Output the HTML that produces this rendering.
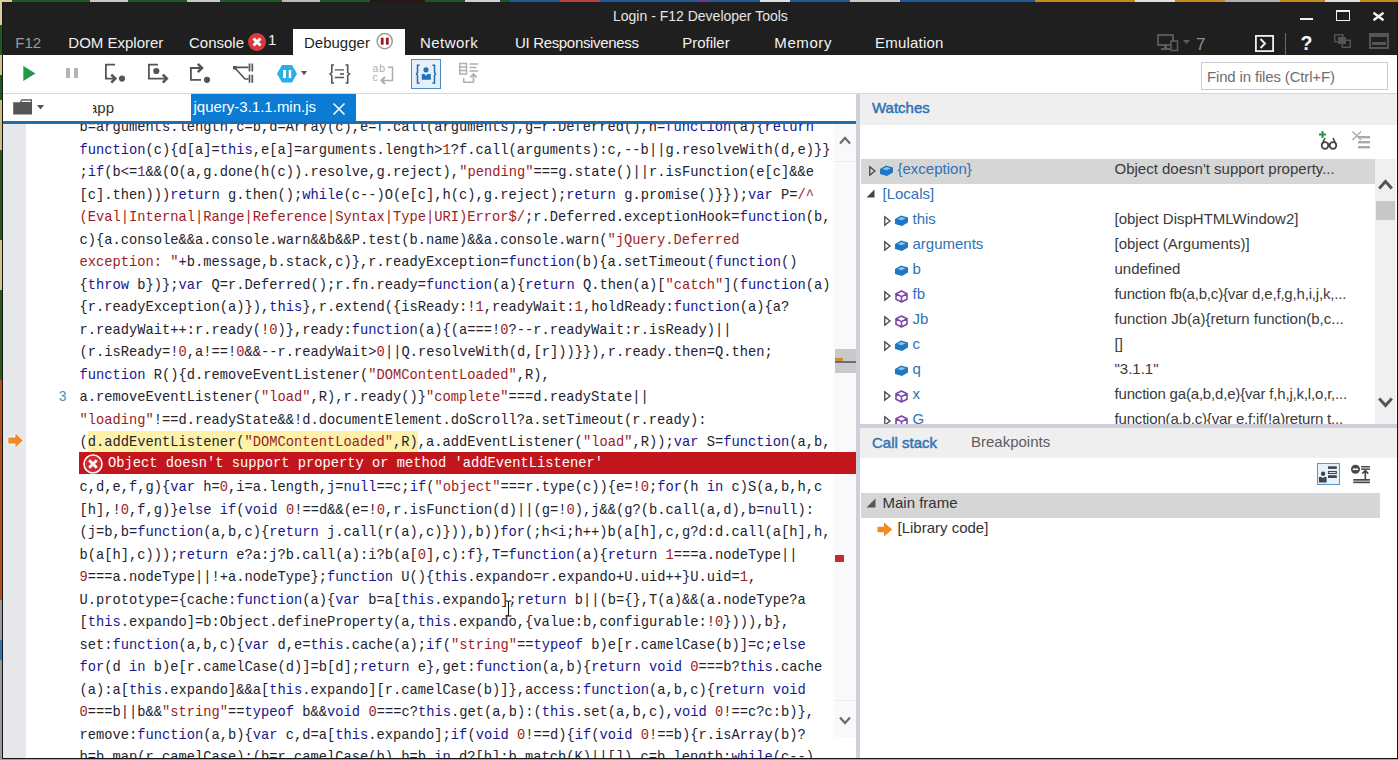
<!DOCTYPE html>
<html><head><meta charset="utf-8"><title>F12</title>
<style>
*{margin:0;padding:0;box-sizing:border-box}
html,body{width:1398px;height:760px;overflow:hidden;background:#a3a3a3;font-family:"Liberation Sans",sans-serif;position:relative}
.a{position:absolute}
svg{position:absolute;overflow:visible}
.t{position:absolute;white-space:nowrap;line-height:20px;font-size:15px}
#code{position:absolute;left:3px;top:124px;width:853px;height:634px;overflow:hidden;background:#fff}
#gut{position:absolute;left:0;top:0;width:23px;height:634px;background:#e6e7ea}
#rows{position:absolute;left:76.5px;top:-7px;font-family:"Liberation Mono",monospace;font-size:13.75px;color:#232330}
.cl{height:22.5px;line-height:22.5px;white-space:pre}
.cl i{font-style:normal}
.k{color:#161690}
.s{color:#9c1c26}
.hl{font-weight:normal;background:#fdf2a8;padding:3.6px 0 3.2px}
.err{background:#c3161c;color:#fff;margin-left:-0.5px;width:779.5px;position:relative;top:-3px}
.et{position:absolute;left:29px;top:1px}
.ei{position:absolute;left:4px;top:2.2px;width:20px;height:20px}
.tab{color:#f2f2f2;top:32.9px}
.tv{color:#3a3a3a}
.tn{color:#2f72b5}
</style></head><body>
<!-- desktop strips -->
<div class="a" style="left:0;top:0;width:1398px;height:2px;background:#1f5a22"></div>
<div class="a" style="left:0;top:0;width:12px;height:2px;background:#d8cf9a"></div>
<div class="a" style="left:90px;top:0;width:38px;height:2px;background:#c8c8c8"></div>
<div class="a" style="left:187px;top:0;width:33px;height:2px;background:#c8c8c8"></div>
<div class="a" style="left:282px;top:0;width:38px;height:2px;background:#b8b8b8"></div>
<div class="a" style="left:370px;top:0;width:55px;height:2px;background:#2a1612"></div>
<div class="a" style="left:465px;top:0;width:35px;height:2px;background:#d0d0d0"></div>
<div class="a" style="left:510px;top:0;width:525px;height:2px;background:#1f5b9a"></div>
<div class="a" style="left:560px;top:0;width:40px;height:2px;background:#b84040"></div>
<div class="a" style="left:698px;top:0;width:12px;height:2px;background:#6a3a8a"></div>
<div class="a" style="left:760px;top:0;width:30px;height:2px;background:#e0e0e0"></div>
<div class="a" style="left:850px;top:0;width:50px;height:2px;background:#c8c8c8"></div>
<div class="a" style="left:1035px;top:0;width:363px;height:2px;background:#c8861e"></div>
<div class="a" style="left:1135px;top:0;width:40px;height:2px;background:#e0e0e0"></div>
<div class="a" style="left:1225px;top:0;width:55px;height:2px;background:#b0b0b0"></div>
<div class="a" style="left:1325px;top:0;width:35px;height:2px;background:#e0e0e0"></div>
<div class="a" style="left:0;top:0px;width:2px;height:25px;background:#d8cf9a"></div>
<div class="a" style="left:0;top:25px;width:2px;height:30px;background:#1f5a22"></div>
<div class="a" style="left:0;top:55px;width:2px;height:20px;background:#cfc48a"></div>
<div class="a" style="left:0;top:75px;width:2px;height:25px;background:#1f5a22"></div>
<div class="a" style="left:0;top:100px;width:2px;height:50px;background:#c9be80"></div>
<div class="a" style="left:0;top:150px;width:2px;height:90px;background:#2a5a22"></div>
<div class="a" style="left:0;top:240px;width:2px;height:50px;background:#cfc48a"></div>
<div class="a" style="left:0;top:290px;width:2px;height:90px;background:#2a5a22"></div>
<div class="a" style="left:0;top:380px;width:2px;height:220px;background:#b5501e"></div>
<div class="a" style="left:0;top:600px;width:2px;height:40px;background:#9a9a9a"></div>
<div class="a" style="left:0;top:640px;width:2px;height:20px;background:#2a7ab0"></div>
<div class="a" style="left:0;top:660px;width:2px;height:100px;background:#9a9a9a"></div>
<!-- window frame -->
<div class="a" style="left:2px;top:2px;width:1396px;height:757px;background:#141414"></div>
<div class="a" style="left:3px;top:2px;width:1394px;height:53px;background:#1f1f1f"></div>
<div class="a" style="left:3px;top:55px;width:1394px;height:703px;background:#fff"></div>

<!-- title -->
<div class="t" style="left:613px;top:5.6px;font-size:14px;color:#e6e6e6">Login - F12 Developer Tools</div>
<div class="a" style="left:1300px;top:18px;width:13px;height:2px;background:#f0f0f0"></div>
<div class="a" style="left:1336px;top:10px;width:14px;height:11px;border:1.5px solid #f0f0f0;border-top-width:2.5px"></div>
<svg style="left:1372px;top:12px" width="13" height="9" viewBox="0 0 13 9"><path d="M1.5 0.8 L11.5 8.2 M11.5 0.8 L1.5 8.2" stroke="#f4f4f4" stroke-width="2.4"/></svg>

<!-- tabs -->
<div class="t tab" style="left:15.3px;color:#9c9c9c">F12</div>
<div class="t tab" style="left:68.3px">DOM Explorer</div>
<div class="t tab" style="left:189px">Console</div>
<svg style="left:248px;top:32.5px" width="18" height="18" viewBox="0 0 18 18"><circle cx="9" cy="9" r="9" fill="#d9383c"/><path d="M5.5 5.5 L12.5 12.5 M12.5 5.5 L5.5 12.5" stroke="#fff" stroke-width="3"/></svg>
<div class="t tab" style="left:268px;top:29.5px">1</div>
<div class="a" style="left:293px;top:29px;width:112px;height:26px;background:#fff"></div>
<div class="t tab" style="left:304px;color:#1e1e1e">Debugger</div>
<svg style="left:376px;top:33px" width="18" height="17" viewBox="0 0 18 17"><circle cx="8.7" cy="8.1" r="7.6" fill="#fff" stroke="#9a9a9a" stroke-width="1.5"/><rect x="4.8" y="4.7" width="2.8" height="7" fill="#9e1a1e"/><rect x="9.9" y="4.7" width="2.8" height="7" fill="#9e1a1e"/></svg>
<div class="t tab" style="left:420px;letter-spacing:0.45px">Network</div>
<div class="t tab" style="left:515px;letter-spacing:-0.33px">UI Responsiveness</div>
<div class="t tab" style="left:682.2px">Profiler</div>
<div class="t tab" style="left:774.3px;letter-spacing:0.6px">Memory</div>
<div class="t tab" style="left:875px;letter-spacing:0.2px">Emulation</div>

<!-- right tab icons -->
<svg style="left:1157px;top:34px" width="22" height="17" viewBox="0 0 22 17"><rect x="1" y="1" width="15" height="10" fill="none" stroke="#5c5c5c" stroke-width="1.8"/><rect x="7" y="11" width="3" height="3" fill="#5c5c5c"/><rect x="4" y="14" width="9" height="2" fill="#5c5c5c"/><rect x="14" y="7" width="6.5" height="9.5" fill="#1f1f1f" stroke="#5c5c5c" stroke-width="1.6"/></svg>
<svg style="left:1183px;top:39.5px" width="7" height="4" viewBox="0 0 7 4"><path d="M0 0 H7 L3.5 4 Z" fill="#5c5c5c"/></svg>
<div class="t tab" style="left:1196px;top:34.5px;font-size:17px;color:#8e8e8e">7</div>
<svg style="left:1255px;top:35px" width="19" height="17" viewBox="0 0 19 17"><rect x="0.9" y="0.9" width="17.2" height="15.2" fill="none" stroke="#f0f0f0" stroke-width="1.8"/><path d="M5.5 4 L10 8.5 L5.5 13" fill="none" stroke="#f0f0f0" stroke-width="2"/></svg>
<div class="a" style="left:1285px;top:33px;width:1px;height:22px;background:#6a6a6a"></div>
<div class="t tab" style="left:1300.5px;top:33px;font-weight:bold;font-size:19.5px;color:#fafafa">?</div>
<svg style="left:1334px;top:34px" width="17" height="14" viewBox="0 0 17 14"><rect x="0.7" y="0.7" width="8" height="7" fill="none" stroke="#555" stroke-width="1.4"/><rect x="4" y="3" width="8" height="7" fill="#555"/><rect x="8.3" y="6.3" width="8" height="7" fill="none" stroke="#555" stroke-width="1.4"/></svg>
<svg style="left:1369px;top:33px" width="20" height="16" viewBox="0 0 20 16"><rect x="1" y="1" width="18" height="14" fill="none" stroke="#555" stroke-width="2"/><rect x="1" y="1" width="18" height="3" fill="#555"/><rect x="3" y="9" width="14" height="3" fill="#555"/></svg>

<!-- toolbar -->
<div class="a" style="left:3px;top:93px;width:1394px;height:1px;background:#d6d6d6"></div>
<svg style="left:23px;top:65.5px" width="13" height="15" viewBox="0 0 13 15"><path d="M0.3 0 L12.5 7.5 L0.3 15 Z" fill="#1e9a48"/></svg>
<div class="a" style="left:66px;top:67.5px;width:4px;height:10.5px;background:#b4b4b4"></div>
<div class="a" style="left:73.5px;top:67.5px;width:4px;height:10.5px;background:#b4b4b4"></div>
<!-- step icons -->
<svg style="left:100px;top:58px" width="115" height="30" viewBox="0 0 115 30"><g fill="none" stroke="#555" stroke-width="1.8"><path d="M15 6.6 H5.9 V20.6 H15"/><path d="M58 6.6 H48.9 V20.6 H67"/><path d="M101 21.8 H90.9 V10 H102"/></g><g fill="none" stroke="#555" stroke-width="2.6" stroke-linejoin="miter"><path d="M11.3 16.6 L15.3 20.6 L11.3 24.6"/><path d="M62.8 16.6 L66.8 20.6 L62.8 24.6"/><path d="M97.8 5.8 L102 10 L97.8 14.2"/></g><g fill="#555"><circle cx="22" cy="20.6" r="3.1"/><circle cx="56.3" cy="13" r="3.1"/><circle cx="107" cy="21.8" r="3.1"/></g></svg>
<!-- break on new worker -->
<svg style="left:225px;top:58px" width="30" height="28" viewBox="0 0 30 28"><rect x="8" y="8" width="3.6" height="3.4" fill="#555"/><path d="M10 9.4 H23.5 M10 10 L20 21 H23.5" fill="none" stroke="#555" stroke-width="1.6"/><path d="M24.5 5.4 V13.5 M27.3 5.4 V13.5 M24.5 16.7 V24.7 M27.3 16.7 V24.7" stroke="#555" stroke-width="1.7"/></svg>
<!-- hex pause -->
<svg style="left:277px;top:65px" width="20" height="18" viewBox="0 0 20 18"><path d="M5 0 H15 L20 8.7 L15 17.4 H5 L0 8.7 Z" fill="#2aaee3"/><rect x="6.1" y="5" width="2.9" height="8" fill="#fff"/><rect x="11.7" y="5" width="2.5" height="8" fill="#fff"/></svg>
<svg style="left:300.8px;top:71px" width="6" height="4.2" viewBox="0 0 6 4.2"><path d="M0 0 H6.1 L3 4.2 Z" fill="#555"/></svg>
<!-- {=} -->
<svg style="left:329px;top:64px" width="22" height="20" viewBox="0 0 22 20"><path d="M5 1 H2.8 V8.5 L1 10 L2.8 11.5 V19 H5" fill="none" stroke="#555" stroke-width="1.6"/><path d="M16.5 1 H18.7 V8.5 L20.5 10 L18.7 11.5 V19 H16.5" fill="none" stroke="#555" stroke-width="1.6"/><path d="M5.8 5.9 H15 M5.8 13.5 H15" stroke="#555" stroke-width="1.4"/><path d="M11 10 H15" stroke="#555" stroke-width="1.6"/></svg>
<!-- abc grayed -->
<svg style="left:372px;top:62px" width="22" height="22" viewBox="0 0 22 22"><text x="0.5" y="9.8" font-family="Liberation Sans" font-size="10.5" fill="#adadad" letter-spacing="1">ab</text><text x="0.5" y="19" font-family="Liberation Sans" font-size="10.5" fill="#adadad">c</text><path d="M16 5.2 H20.5 V18.5 H10" fill="none" stroke="#adadad" stroke-width="1.5"/><path d="M13 15 L9.5 18.5 L13 22" fill="none" stroke="#adadad" stroke-width="2"/></svg>
<!-- active button -->
<div class="a" style="left:411px;top:59px;width:30px;height:30px;background:#e6f0fb;border:1px solid #4f8cc4"></div>
<svg style="left:416px;top:64px" width="20" height="20" viewBox="0 0 20 20"><path d="M3.6 1.2 H1.5 V8.5 L0.5 10 L1.5 11.5 V19 H3.6" fill="none" stroke="#2a6aa6" stroke-width="1.5"/><path d="M16.4 1.2 H18.5 V8.5 L19.5 10 L18.5 11.5 V19 H16.4" fill="none" stroke="#2a6aa6" stroke-width="1.5"/><circle cx="10" cy="5.8" r="2.6" fill="#1f72bb"/><path d="M5.8 15.7 V10 H8.3 L10 11.8 L11.7 10 H14.8 V15.7 Z" fill="#1f72bb"/></svg>
<!-- pretty print grayed -->
<svg style="left:459px;top:62px" width="20" height="22" viewBox="0 0 20 22"><rect x="0.8" y="1.5" width="6.7" height="10.5" fill="none" stroke="#b0b0b0" stroke-width="1.5"/><path d="M0.8 5 H7.5 M0.8 8.5 H7.5" stroke="#b0b0b0" stroke-width="1.3"/><path d="M10.5 2 H19 M10.5 5.5 H17.5 M10.5 9 H19" stroke="#b0b0b0" stroke-width="1.4"/><path d="M4.7 16 V20.3 H14.5" fill="none" stroke="#b0b0b0" stroke-width="1.5"/><path d="M14.5 20.3 V12.5 M11.2 15.5 L14.5 12 L17.8 15.5" fill="none" stroke="#b0b0b0" stroke-width="1.7"/></svg>
<!-- find input -->
<div class="a" style="left:1201px;top:62px;width:187px;height:28px;border:1px solid #c6cbd6;background:#fff"></div>
<div class="t" style="left:1207px;top:66.8px;color:#6f6f6f;letter-spacing:-0.16px">Find in files (Ctrl+F)</div>

<!-- file tab row -->
<svg style="left:13px;top:99px" width="20" height="16" viewBox="0 0 20 16"><path d="M0.2 3.2 H6.8 L8.3 0.2 H19 V15.6 H0.2 Z" fill="#555"/><path d="M8.6 2.3 H17.9" stroke="#fff" stroke-width="1.3"/></svg>
<svg style="left:36.5px;top:105px" width="7" height="5" viewBox="0 0 7 5"><path d="M0 0 H7 L3.5 4.6 Z" fill="#555"/></svg>
<div class="t" style="left:89px;top:98px;color:#333">app</div>
<div class="a" style="left:80px;top:96px;width:12.5px;height:24px;background:#fff"></div>
<div class="a" style="left:191px;top:94px;width:165px;height:28px;background:#0b7bd3"></div>
<div class="t" style="left:193.5px;top:97px;color:#fff">jquery-3.1.1.min.js</div>
<svg style="left:333px;top:103px" width="12" height="12" viewBox="0 0 12 12"><path d="M0.5 0.5 L11.5 11.5 M11.5 0.5 L0.5 11.5" stroke="#fff" stroke-width="1.5"/></svg>
<div class="a" style="left:3px;top:121px;width:853px;height:3px;background:#1f6daf"></div>

<!-- code -->
<div id="code">
<div id="gut"></div>
<!-- scrollbar -->
<div class="a" style="left:831px;top:0;width:22px;height:613px;background:#f9f9f9"></div><div class="a" style="left:831px;top:37px;width:22px;height:1px;background:#ededed"></div><div class="a" style="left:831px;top:575.5px;width:22px;height:1px;background:#ededed"></div>
<svg style="left:836px;top:12px" width="12" height="9" viewBox="0 0 12 9"><path d="M1 7.5 L6 2 L11 7.5" fill="none" stroke="#6c6c6c" stroke-width="2.2"/></svg>
<svg style="left:836px;top:591.5px" width="12" height="9" viewBox="0 0 12 9"><path d="M1 1.5 L6 7 L11 1.5" fill="none" stroke="#6c6c6c" stroke-width="2.2"/></svg>
<div class="a" style="left:831.5px;top:225px;width:21px;height:24px;background:#c9c9c9"></div>
<div class="a" style="left:832px;top:234px;width:8px;height:5px;background:#d08a3a"></div>
<div class="a" style="left:832px;top:237px;width:21px;height:2px;background:#6a6a8a"></div>
<div class="a" style="left:832.2px;top:430.5px;width:8.6px;height:7.5px;background:#c62a33"></div>
<div id="rows">
<div class="cl">b=arguments.length,c=b,d=Array(c),e=f.call(arguments),g=r.Deferred(),h=<i class="k">function</i>(a){<i class="k">return</i></div>
<div class="cl"><i class="k">function</i>(c){d[a]=<i class="k">this</i>,e[a]=arguments.length&gt;<i class="s">1</i>?f.call(arguments):c,--b||g.resolveWith(d,e)}}</div>
<div class="cl">;<i class="k">if</i>(b&lt;=<i class="s">1</i>&amp;&amp;(O(a,g.done(h(c)).resolve,g.reject),<i class="s">"pending"</i>===g.state()||r.isFunction(e[c]&amp;&amp;e</div>
<div class="cl">[c].then)))<i class="k">return</i> g.then();<i class="k">while</i>(c--)O(e[c],h(c),g.reject);<i class="k">return</i> g.promise()}});<i class="k">var</i> P=<i class="s">/^</i></div>
<div class="cl"><i class="s">(Eval|Internal|Range|Reference|Syntax|Type|URI)Error$/</i>;r.Deferred.exceptionHook=<i class="k">function</i>(b,</div>
<div class="cl">c){a.console&amp;&amp;a.console.warn&amp;&amp;b&amp;&amp;P.test(b.name)&amp;&amp;a.console.warn(<i class="s">"jQuery.Deferred</i></div>
<div class="cl"><i class="s">exception: "</i>+b.message,b.stack,c)},r.readyException=<i class="k">function</i>(b){a.setTimeout(<i class="k">function</i>()</div>
<div class="cl">{<i class="k">throw</i> b})};<i class="k">var</i> Q=r.Deferred();r.fn.ready=<i class="k">function</i>(a){<i class="k">return</i> Q.then(a)[<i class="s">"catch"</i>](<i class="k">function</i>(a)</div>
<div class="cl">{r.readyException(a)}),<i class="k">this</i>},r.extend({isReady:!<i class="s">1</i>,readyWait:<i class="s">1</i>,holdReady:<i class="k">function</i>(a){a?</div>
<div class="cl">r.readyWait++:r.ready(!<i class="s">0</i>)},ready:<i class="k">function</i>(a){(a===!<i class="s">0</i>?--r.readyWait:r.isReady)||</div>
<div class="cl">(r.isReady=!<i class="s">0</i>,a!==!<i class="s">0</i>&amp;&amp;--r.readyWait&gt;<i class="s">0</i>||Q.resolveWith(d,[r]))}}),r.ready.then=Q.then;</div>
<div class="cl"><i class="k">function</i> R(){d.removeEventListener(<i class="s">"DOMContentLoaded"</i>,R),</div>
<div class="cl">a.removeEventListener(<i class="s">"load"</i>,R),r.ready()}<i class="s">"complete"</i>===d.readyState||</div>
<div class="cl"><i class="s">"loading"</i>!==d.readyState&amp;&amp;!d.documentElement.doScroll?a.setTimeout(r.ready):</div>
<div class="cl">(<b class="hl">d.addEventListener(<i class="s">"DOMContentLoaded"</i>,R)</b>,a.addEventListener(<i class="s">"load"</i>,R));<i class="k">var</i> S=<i class="k">function</i>(a,b,</div>
<div class="cl err"><svg class="ei" width="20" height="20" viewBox="0 0 20 20"><circle cx="10" cy="10" r="9" fill="#d02a2e" stroke="#fff" stroke-width="1.6"/><path d="M6.2 6.2 L13.8 13.8 M13.8 6.2 L6.2 13.8" stroke="#fff" stroke-width="2.8"/></svg><span class="et">Object doesn't support property or method 'addEventListener'</span></div>
<div class="cl">c,d,e,f,g){<i class="k">var</i> h=<i class="s">0</i>,i=a.length,j=<i class="k">null</i>==c;<i class="k">if</i>(<i class="s">"object"</i>===r.type(c)){e=!<i class="s">0</i>;<i class="k">for</i>(h <i class="k">in</i> c)S(a,b,h,c</div>
<div class="cl">[h],!<i class="s">0</i>,f,g)}<i class="k">else</i> <i class="k">if</i>(<i class="k">void</i> <i class="s">0</i>!==d&amp;&amp;(e=!<i class="s">0</i>,r.isFunction(d)||(g=!<i class="s">0</i>),j&amp;&amp;(g?(b.call(a,d),b=<i class="k">null</i>):</div>
<div class="cl">(j=b,b=<i class="k">function</i>(a,b,c){<i class="k">return</i> j.call(r(a),c)})),b))<i class="k">for</i>(;h&lt;i;h++)b(a[h],c,g?d:d.call(a[h],h,</div>
<div class="cl">b(a[h],c)));<i class="k">return</i> e?a:j?b.call(a):i?b(a[<i class="s">0</i>],c):f},T=<i class="k">function</i>(a){<i class="k">return</i> <i class="s">1</i>===a.nodeType||</div>
<div class="cl"><i class="s">9</i>===a.nodeType||!+a.nodeType};<i class="k">function</i> U(){<i class="k">this</i>.expando=r.expando+U.uid++}U.uid=<i class="s">1</i>,</div>
<div class="cl">U.prototype={cache:<i class="k">function</i>(a){<i class="k">var</i> b=a[<i class="k">this</i>.expando];<i class="k">return</i> b||(b={},T(a)&amp;&amp;(a.nodeType?a</div>
<div class="cl">[<i class="k">this</i>.expando]=b:Object.defineProperty(a,<i class="k">this</i>.expando,{value:b,configurable:!<i class="s">0</i>}))),b},</div>
<div class="cl">set:<i class="k">function</i>(a,b,c){<i class="k">var</i> d,e=<i class="k">this</i>.cache(a);<i class="k">if</i>(<i class="s">"string"</i>==<i class="k">typeof</i> b)e[r.camelCase(b)]=c;<i class="k">else</i></div>
<div class="cl"><i class="k">for</i>(d <i class="k">in</i> b)e[r.camelCase(d)]=b[d];<i class="k">return</i> e},get:<i class="k">function</i>(a,b){<i class="k">return</i> <i class="k">void</i> <i class="s">0</i>===b?<i class="k">this</i>.cache</div>
<div class="cl">(a):a[<i class="k">this</i>.expando]&amp;&amp;a[<i class="k">this</i>.expando][r.camelCase(b)]},access:<i class="k">function</i>(a,b,c){<i class="k">return</i> <i class="k">void</i></div>
<div class="cl"><i class="s">0</i>===b||b&amp;&amp;<i class="s">"string"</i>==<i class="k">typeof</i> b&amp;&amp;<i class="k">void</i> <i class="s">0</i>===c?<i class="k">this</i>.get(a,b):(<i class="k">this</i>.set(a,b,c),<i class="k">void</i> <i class="s">0</i>!==c?c:b)},</div>
<div class="cl">remove:<i class="k">function</i>(a,b){<i class="k">var</i> c,d=a[<i class="k">this</i>.expando];<i class="k">if</i>(<i class="k">void</i> <i class="s">0</i>!==d){<i class="k">if</i>(<i class="k">void</i> <i class="s">0</i>!==b){r.isArray(b)?</div>
<div class="cl">b=b.map(r.camelCase):(b=r.camelCase(b),b=b <i class="k">in</i> d?[b]:b.match(K)||[]),c=b.length;<i class="k">while</i>(c--)</div>
</div>
<div class="t" style="left:55.5px;top:264px;font-family:'Liberation Mono',monospace;font-size:13.75px;color:#4a8bb5">3</div>
<svg style="left:3.5px;top:308px" width="17" height="17" viewBox="0 0 17 17"><path d="M0.8 5 H8 V0.6 L16.2 8.5 L8 16.4 V12 H0.8 Z" fill="#f08a24" stroke="#fff" stroke-width="0.9"/></svg>
<!-- text cursor -->
<svg style="left:501px;top:476px" width="9" height="17" viewBox="0 0 9 17"><path d="M1.5 1 H3.5 Q4.5 1 4.5 2 V15 Q4.5 16 3.5 16 H1.5 M7.5 1 H5.5 Q4.5 1 4.5 2 M4.5 15 Q4.5 16 5.5 16 H7.5" fill="none" stroke="#111" stroke-width="1.1"/></svg>
</div>

<!-- splitter -->
<div class="a" style="left:856px;top:94px;width:4px;height:664px;background:#cfd0dc"></div>

<!-- right pane -->
<div class="a" style="left:860px;top:94px;width:537px;height:30.5px;background:#efefef"></div>
<div class="t tn" style="left:872px;top:98px;font-size:15px;-webkit-text-stroke:0.45px #2f72b5">Watches</div>
<!-- add watch icon -->
<svg style="left:1319px;top:131px" width="19" height="19" viewBox="0 0 19 19"><path d="M3.5 0 V7 M0 3.5 H7" stroke="#1a9a4a" stroke-width="2"/><circle cx="6" cy="14.5" r="3.3" fill="none" stroke="#444" stroke-width="1.8"/><circle cx="14" cy="14.5" r="3.3" fill="none" stroke="#444" stroke-width="1.8"/><path d="M9 13.5 Q10 12.5 11 13.5 M3 13 L6 7 M17 13 L14 7" fill="none" stroke="#444" stroke-width="1.6"/></svg>
<svg style="left:1352px;top:131px" width="19" height="19" viewBox="0 0 19 19"><path d="M0.5 0.5 L9 9 M9 0.5 L0.5 9" stroke="#aaa" stroke-width="1.4"/><rect x="6" y="5" width="12" height="2.4" fill="#aaa"/><rect x="6" y="10" width="12" height="2.4" fill="#aaa"/><rect x="6" y="15" width="12" height="2.4" fill="#aaa"/></svg>

<!-- watches tree -->
<div class="a" style="left:861px;top:159px;width:514px;height:24.5px;background:#d6d6d6"></div>
<div class="a" style="left:860px;top:159px;width:515px;height:265px;overflow:hidden">
<svg style="left:9px;top:6.5px" width="7" height="10" viewBox="0 0 7 10"><path d="M0.8 0.8 L6 5 L0.8 9.2 Z" fill="none" stroke="#444" stroke-width="1.3"/></svg>
<svg style="left:20px;top:6px" width="13" height="11" viewBox="0 0 13 11"><path d="M0 4 L6 0.5 L13 2.5 V7.5 L7 11 L0 9 Z" fill="#1f78c4"/><path d="M2.5 4 L6.3 2 L10.5 3.2 L6.8 5.2 Z" fill="#8cc4ee"/></svg>
<div class="t tn" style="left:37.5px;top:0px">{exception}</div>
<div class="t tv" style="left:254.5px;top:0px;letter-spacing:0">Object doesn&#x27;t support property...</div>
<svg style="left:6.3px;top:30px" width="9" height="9" viewBox="0 0 9 9"><path d="M8.5 0.5 V8.5 H0.5 Z" fill="#444"/></svg>
<div class="t tn" style="left:22.5px;top:25px">[Locals]</div>
<svg style="left:24px;top:56.5px" width="7" height="10" viewBox="0 0 7 10"><path d="M0.8 0.8 L6 5 L0.8 9.2 Z" fill="none" stroke="#444" stroke-width="1.3"/></svg>
<svg style="left:35px;top:56px" width="13" height="11" viewBox="0 0 13 11"><path d="M0 4 L6 0.5 L13 2.5 V7.5 L7 11 L0 9 Z" fill="#1f78c4"/><path d="M2.5 4 L6.3 2 L10.5 3.2 L6.8 5.2 Z" fill="#8cc4ee"/></svg>
<div class="t tn" style="left:52.5px;top:50px">this</div>
<div class="t tv" style="left:254.5px;top:50px;letter-spacing:0">[object DispHTMLWindow2]</div>
<svg style="left:24px;top:81.5px" width="7" height="10" viewBox="0 0 7 10"><path d="M0.8 0.8 L6 5 L0.8 9.2 Z" fill="none" stroke="#444" stroke-width="1.3"/></svg>
<svg style="left:35px;top:81px" width="13" height="11" viewBox="0 0 13 11"><path d="M0 4 L6 0.5 L13 2.5 V7.5 L7 11 L0 9 Z" fill="#1f78c4"/><path d="M2.5 4 L6.3 2 L10.5 3.2 L6.8 5.2 Z" fill="#8cc4ee"/></svg>
<div class="t tn" style="left:52.5px;top:75px">arguments</div>
<div class="t tv" style="left:254.5px;top:75px;letter-spacing:0">[object (Arguments)]</div>
<svg style="left:35px;top:106px" width="13" height="11" viewBox="0 0 13 11"><path d="M0 4 L6 0.5 L13 2.5 V7.5 L7 11 L0 9 Z" fill="#1f78c4"/><path d="M2.5 4 L6.3 2 L10.5 3.2 L6.8 5.2 Z" fill="#8cc4ee"/></svg>
<div class="t tn" style="left:52.5px;top:100px">b</div>
<div class="t tv" style="left:254.5px;top:100px;letter-spacing:0">undefined</div>
<svg style="left:24px;top:131.5px" width="7" height="10" viewBox="0 0 7 10"><path d="M0.8 0.8 L6 5 L0.8 9.2 Z" fill="none" stroke="#444" stroke-width="1.3"/></svg>
<svg style="left:35px;top:130.5px" width="13" height="13" viewBox="0 0 13 13"><path d="M6.5 1 L12 3.8 V9.2 L6.5 12 L1 9.2 V3.8 Z M1 3.8 L6.5 6.6 L12 3.8 M6.5 6.6 V12" fill="none" stroke="#7a48a6" stroke-width="1.6" stroke-linejoin="round"/></svg>
<div class="t tn" style="left:52.5px;top:125px">fb</div>
<div class="t tv" style="left:254.5px;top:125px;letter-spacing:-0.18px">function fb(a,b,c){var d,e,f,g,h,i,j,k,...</div>
<svg style="left:24px;top:156.5px" width="7" height="10" viewBox="0 0 7 10"><path d="M0.8 0.8 L6 5 L0.8 9.2 Z" fill="none" stroke="#444" stroke-width="1.3"/></svg>
<svg style="left:35px;top:155.5px" width="13" height="13" viewBox="0 0 13 13"><path d="M6.5 1 L12 3.8 V9.2 L6.5 12 L1 9.2 V3.8 Z M1 3.8 L6.5 6.6 L12 3.8 M6.5 6.6 V12" fill="none" stroke="#7a48a6" stroke-width="1.6" stroke-linejoin="round"/></svg>
<div class="t tn" style="left:52.5px;top:150px">Jb</div>
<div class="t tv" style="left:254.5px;top:150px;letter-spacing:0">function Jb(a){return function(b,c...</div>
<svg style="left:24px;top:181.5px" width="7" height="10" viewBox="0 0 7 10"><path d="M0.8 0.8 L6 5 L0.8 9.2 Z" fill="none" stroke="#444" stroke-width="1.3"/></svg>
<svg style="left:35px;top:181px" width="13" height="11" viewBox="0 0 13 11"><path d="M0 4 L6 0.5 L13 2.5 V7.5 L7 11 L0 9 Z" fill="#1f78c4"/><path d="M2.5 4 L6.3 2 L10.5 3.2 L6.8 5.2 Z" fill="#8cc4ee"/></svg>
<div class="t tn" style="left:52.5px;top:175px">c</div>
<div class="t tv" style="left:254.5px;top:175px;letter-spacing:0">[]</div>
<svg style="left:35px;top:206px" width="13" height="11" viewBox="0 0 13 11"><path d="M0 4 L6 0.5 L13 2.5 V7.5 L7 11 L0 9 Z" fill="#1f78c4"/><path d="M2.5 4 L6.3 2 L10.5 3.2 L6.8 5.2 Z" fill="#8cc4ee"/></svg>
<div class="t tn" style="left:52.5px;top:200px">q</div>
<div class="t tv" style="left:254.5px;top:200px;letter-spacing:0">&quot;3.1.1&quot;</div>
<svg style="left:24px;top:231.5px" width="7" height="10" viewBox="0 0 7 10"><path d="M0.8 0.8 L6 5 L0.8 9.2 Z" fill="none" stroke="#444" stroke-width="1.3"/></svg>
<svg style="left:35px;top:230.5px" width="13" height="13" viewBox="0 0 13 13"><path d="M6.5 1 L12 3.8 V9.2 L6.5 12 L1 9.2 V3.8 Z M1 3.8 L6.5 6.6 L12 3.8 M6.5 6.6 V12" fill="none" stroke="#7a48a6" stroke-width="1.6" stroke-linejoin="round"/></svg>
<div class="t tn" style="left:52.5px;top:225px">x</div>
<div class="t tv" style="left:254.5px;top:225px;letter-spacing:-0.18px">function ga(a,b,d,e){var f,h,j,k,l,o,r,...</div>
<svg style="left:24px;top:256.5px" width="7" height="10" viewBox="0 0 7 10"><path d="M0.8 0.8 L6 5 L0.8 9.2 Z" fill="none" stroke="#444" stroke-width="1.3"/></svg>
<svg style="left:35px;top:255.5px" width="13" height="13" viewBox="0 0 13 13"><path d="M6.5 1 L12 3.8 V9.2 L6.5 12 L1 9.2 V3.8 Z M1 3.8 L6.5 6.6 L12 3.8 M6.5 6.6 V12" fill="none" stroke="#7a48a6" stroke-width="1.6" stroke-linejoin="round"/></svg>
<div class="t tn" style="left:52.5px;top:250px">G</div>
<div class="t tv" style="left:254.5px;top:250px;letter-spacing:-0.18px">function(a,b,c){var e,f;if(!a)return t...</div>
</div>

<!-- watches scrollbar -->
<div class="a" style="left:1375px;top:159px;width:21px;height:265px;background:#f0f0f0"></div>
<svg style="left:1378px;top:179px" width="15" height="11" viewBox="0 0 15 11"><path d="M1.2 9.5 L7.5 2.5 L13.8 9.5" fill="none" stroke="#555" stroke-width="3"/></svg>
<div class="a" style="left:1376px;top:201px;width:19px;height:19px;background:#c8c8c8"></div>
<svg style="left:1378px;top:397px" width="15" height="11" viewBox="0 0 15 11"><path d="M1.2 1.5 L7.5 8.5 L13.8 1.5" fill="none" stroke="#555" stroke-width="3"/></svg>

<!-- h splitter -->
<div class="a" style="left:860px;top:424px;width:537px;height:4px;background:#cfd0dc"></div>
<div class="a" style="left:860px;top:428px;width:537px;height:30px;background:#efefef"></div>
<div class="t tn" style="left:872px;top:432.5px;font-size:15px;-webkit-text-stroke:0.45px #2f72b5">Call stack</div>
<div class="t" style="left:971px;top:432px;color:#5c5c5c;font-size:15px">Breakpoints</div>
<!-- call stack icons -->
<div class="a" style="left:1317px;top:463px;width:23px;height:22px;border:1px solid #5b95cc;background:#e8f2fc"></div>
<svg style="left:1317px;top:463px" width="23" height="22" viewBox="0 0 23 22"><circle cx="6.1" cy="10.8" r="2.2" fill="#444"/><path d="M1.9 19.6 V14 H4.7 L5.8 15.5 L6.9 14 H9.6 V19.6 Z" fill="#444"/><rect x="11" y="3.3" width="8.8" height="2.6" fill="#444"/><rect x="11.5" y="8.5" width="7.8" height="2" fill="none" stroke="#444" stroke-width="1.1"/><rect x="11" y="12.2" width="8.8" height="2.8" fill="#444"/></svg>
<svg style="left:1350px;top:463px" width="21" height="21" viewBox="0 0 21 21"><circle cx="5.5" cy="6.3" r="4.5" fill="#484848"/><rect x="2.8" y="5.5" width="5.4" height="1.6" fill="#fff"/><rect x="11.1" y="3" width="8.8" height="1.5" fill="#484848"/><rect x="11.1" y="5.4" width="8.8" height="1.5" fill="#484848"/><path d="M12.4 10.6 L15.3 7.4 L18.2 10.6 M15.3 7.8 V16.5" fill="none" stroke="#484848" stroke-width="1.6"/><rect x="3.3" y="16" width="16.6" height="1.7" fill="#484848"/><rect x="3.3" y="18.5" width="16.6" height="1.7" fill="#484848"/></svg>
<div class="a" style="left:861px;top:493px;width:519px;height:25px;background:#d6d6d6"></div>
<svg style="left:866px;top:498px" width="10" height="10" viewBox="0 0 10 10"><path d="M9.5 0.5 V9.5 H0.5 Z" fill="#555"/></svg>
<div class="t" style="left:882.5px;top:493px;color:#333">Main frame</div>
<svg style="left:876.5px;top:522px" width="16" height="15" viewBox="0 0 16 15"><path d="M0.5 4.8 H7 V0.5 L15.2 7.5 L7 14.5 V10.2 H0.5 Z" fill="#f08a24"/></svg>
<div class="t" style="left:897.5px;top:518px;color:#333">[Library code]</div>

<!-- window border overlay -->
<div class="a" style="left:1397px;top:2px;width:1px;height:757px;background:#141414"></div>
<div class="a" style="left:2px;top:758px;width:1396px;height:1px;background:#141414"></div>
<div class="a" style="left:0;top:759px;width:1398px;height:1px;background:#a3a3a3"></div>
</body></html>
